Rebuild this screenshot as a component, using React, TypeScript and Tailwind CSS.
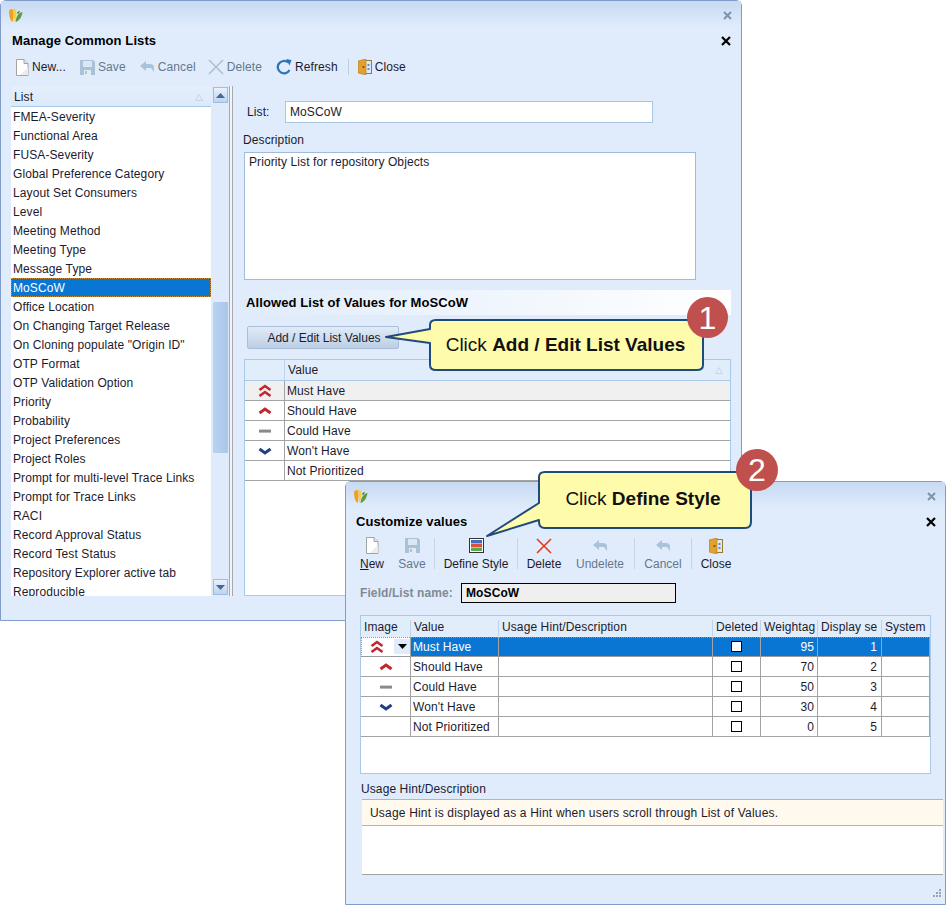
import React from "react";

const listItems = ["FMEA-Severity","Functional Area","FUSA-Severity","Global Preference Category","Layout Set Consumers","Level","Meeting Method","Meeting Type","Message Type","MoSCoW","Office Location","On Changing Target Release","On Cloning populate \"Origin ID\"","OTP Format","OTP Validation Option","Priority","Probability","Project Preferences","Project Roles","Prompt for multi-level Trace Links","Prompt for Trace Links","RACI","Record Approval Status","Record Test Status","Repository Explorer active tab","Reproducible"];

function Logo() {
  return (
    <svg width="15" height="15" viewBox="0 0 15 15">
      <path d="M1 4 C1 1 4 0 5 2 C6 5 5.5 11 4.5 14 C2.5 13 1 8 1 4Z" fill="#f0a028" />
      <path d="M5 1 C7 0 8.5 2 8.5 5 C8.5 9 7.5 12 5.5 14 C6.5 10 6.5 5 5 1Z" fill="#f6cf3e" />
      <path d="M7.5 14 C8 9 10 5 14.5 4 C14 8 11.5 13 7.5 14Z" fill="#5f9a35" />
      <path d="M9 5 C10 3 11.5 3 12 3.5 L10 6Z" fill="#2f7d2a" />
    </svg>
  );
}
function WinX() {
  return <svg width="9" height="9" viewBox="0 0 9 9"><path d="M1 1 L8 8 M8 1 L1 8" stroke="#7d93ad" strokeWidth="2" /></svg>;
}
function BlackX() {
  return <svg width="10" height="10" viewBox="0 0 10 10"><path d="M1 1 L9 9 M9 1 L1 9" stroke="#000" strokeWidth="2.2" /></svg>;
}
function NewIcon() {
  return <svg width="14" height="17" viewBox="0 0 14 17"><path d="M1.5 .5 H9 L13 4.5 V16.5 H1.5Z" fill="#fff" stroke="#a3a3a3" /><path d="M9 .5 V4.5 H13" fill="#e4e4e4" stroke="#a3a3a3" /><path d="M5 16 L13 8 V16Z" fill="#ececec" /></svg>;
}
function SaveIcon() {
  return <svg width="15" height="15" viewBox="0 0 15 15"><path d="M0 0 H13 L15 2 V15 H0Z" fill="#a9c2da" /><rect x="3" y="1" width="9" height="6" fill="#dbe7f2" /><rect x="4" y="10" width="7" height="5" fill="#e3ecf5" /><rect x="5" y="11" width="2" height="3" fill="#a9c2da" /></svg>;
}
function BackIcon() {
  return <svg width="15" height="12" viewBox="0 0 15 12"><path d="M6 0 L0 5 L6 10 V7 H11 L14 11 V6 C14 4 12 3 10 3 H6Z" fill="#aac3da" /></svg>;
}
function GrayDelete() {
  return <svg width="16" height="16" viewBox="0 0 16 16"><path d="M1 1 L15 15 M15 1 L1 15" stroke="#a9bccf" strokeWidth="1.4" /></svg>;
}
function RedDelete() {
  return <svg width="16" height="16" viewBox="0 0 16 16"><path d="M1 1 L15 15 M15 1 L1 15" stroke="#e8391f" strokeWidth="1.6" /></svg>;
}
function RefreshIcon() {
  return <svg width="16" height="16" viewBox="0 0 16 16"><path d="M13.5 11 A6.2 6.2 0 1 1 12 3.4" fill="none" stroke="#2b73b8" strokeWidth="2.2" /><path d="M10 0 L15.5 1 L13.5 6.5Z" fill="#2b73b8" /></svg>;
}
function CloseIcon() {
  return <svg width="14" height="16" viewBox="0 0 14 16"><rect x="7" y="1.5" width="6.5" height="13" fill="#dfe9f3" stroke="#9a7a2c" /><path d="M0 2 L8 0 V16 L0 14Z" fill="#e2a02e" stroke="#a87a1d" strokeWidth=".6" /><circle cx="5.5" cy="8" r="1" fill="#6c4a10" /><rect x="9.5" y="5" width="2" height="2" fill="#5a8fc8" /><rect x="9.5" y="9" width="2" height="2" fill="#5a8fc8" /></svg>;
}
function StyleIcon() {
  return <svg width="15" height="15" viewBox="0 0 15 15"><rect x=".5" y=".5" width="14" height="14" fill="#fff" stroke="#333" /><rect x="2" y="2" width="11" height="3.4" fill="#3f6fc0" /><rect x="2" y="5.8" width="11" height="3.4" fill="#d8503f" /><rect x="2" y="9.6" width="11" height="3.4" fill="#5aa84a" /></svg>;
}
function Chevrons({ kind }: { kind: string }) {
  if (kind === "must") return <svg width="14" height="14" viewBox="0 0 14 14"><path d="M1.5 6 L7 2 L12.5 6 M1.5 12 L7 8 L12.5 12" fill="none" stroke="#c1272d" strokeWidth="2.6" /></svg>;
  if (kind === "should") return <svg width="14" height="14" viewBox="0 0 14 14"><path d="M1.5 9 L7 5 L12.5 9" fill="none" stroke="#c1272d" strokeWidth="3" /></svg>;
  if (kind === "could") return <svg width="14" height="14" viewBox="0 0 14 14"><rect x="1" y="5.6" width="12" height="3" fill="#8a8a8a" /></svg>;
  if (kind === "wont") return <svg width="14" height="14" viewBox="0 0 14 14"><path d="M1.5 5 L7 9 L12.5 5" fill="none" stroke="#1f3f86" strokeWidth="3" /></svg>;
  return null;
}
function SortTri() {
  return <svg width="8" height="7" viewBox="0 0 8 7"><path d="M4 .5 L7.5 6.5 H.5Z" fill="none" stroke="#c3d6ec" /></svg>;
}
function Tool({ icon, label, gray, className }: { icon: React.ReactNode; label: string; gray?: boolean; className?: string }) {
  return (
    <div className={`flex items-center gap-[3px] ${gray ? "text-[#66788c]" : "text-[#1b1b2e]"} ${className ?? ""}`}>
      {icon}
      <span>{label}</span>
    </div>
  );
}
function VTool({ icon, label, gray, w, underline }: { icon: React.ReactNode; label: string; gray?: boolean; w: string; underline?: boolean }) {
  return (
    <div className={`flex flex-col items-center shrink-0 tracking-normal ${w} ${gray ? "text-[#66788c]" : "text-[#1b1b2e]"}`}>
      <div className="h-[21px] flex items-center">{icon}</div>
      <span className="leading-[14px] mt-[1px] whitespace-nowrap">{underline ? <><span className="underline">N</span>ew</> : label}</span>
    </div>
  );
}
const VSep = () => <div className="w-px h-[31px] bg-[#c6d3e2] shrink-0" />;

const mainRows = [["must","Must Have"],["should","Should Have"],["could","Could Have"],["wont","Won't Have"],["","Not Prioritized"]];
const custRows = [["must","Must Have","95","1"],["should","Should Have","70","2"],["could","Could Have","50","3"],["wont","Won't Have","30","4"],["","Not Prioritized","0","5"]];

function TitleBar({ h }: { h: string }) {
  return (
    <div className={`${h} bg-gradient-to-b from-[#c7daf2] to-[#e0ecfb] flex items-center justify-between pl-[7px] pr-[9px] pt-[2px] shrink-0`}>
      <Logo />
      <WinX />
    </div>
  );
}

function Callout({ className, width, height, d }: { className: string; width: number; height: number; d: string }) {
  return (
    <svg className={className} width={width} height={height} viewBox={`0 0 ${width} ${height}`}>
      <path d={d} fill="#fefbaa" stroke="#1f4a7d" strokeWidth="2" strokeLinejoin="round" />
    </svg>
  );
}

function MainWindow() {
  return (
    <div className="w-[742px] h-[621px] bg-[#e0ecfb] border border-[#7f9dc8] rounded-tl-[6px] rounded-tr-[6px] flex flex-col text-[12px] leading-[14px] tracking-[0.1px] text-[#1b1b2e]">
      <TitleBar h="h-[26px]" />
      <div className="flex items-center justify-between pl-[11px] pr-[10px] h-[18px] mt-[5px]">
        <span className="font-bold text-[13px] text-black">Manage Common Lists</span>
        <BlackX />
      </div>
      <div className="flex items-center h-[22px] mt-[6px] pl-[14px] gap-[14px]">
        <Tool icon={<NewIcon />} label="New..." />
        <Tool icon={<SaveIcon />} label="Save" gray />
        <Tool icon={<BackIcon />} label="Cancel" gray />
        <Tool icon={<GrayDelete />} label="Delete" gray className="-ml-[2px]" />
        <Tool icon={<RefreshIcon />} label="Refresh" />
        <div className="w-px h-[16px] bg-[#c0cddd] -ml-[4px] -mr-[5px]" />
        <Tool icon={<CloseIcon />} label="Close" />
      </div>
      <div className="flex mt-[8px] ml-[10px] h-[510px]">
        <div className="w-[200px] flex flex-col overflow-hidden bg-white shrink-0">
          <div className="h-[21px] shrink-0 bg-gradient-to-b from-[#e5effc] to-[#dce9fa] border-b border-[#a9c8ea] flex items-center justify-between pl-[3px] pr-[8px] text-[12px] pt-[2px]">
            <span>List</span><SortTri />
          </div>
          {listItems.map((t) => (
            <div key={t} className={`h-[19px] shrink-0 pl-[2px] flex items-center whitespace-nowrap ${t === "MoSCoW" ? "bg-[#0a76d3] text-white outline-1 -outline-offset-1 outline-dotted outline-[#c98a35]" : ""}`}>{t}</div>
          ))}
        </div>
        <div className="w-[17px] bg-[#dfeafa] flex flex-col items-center ml-px shrink-0">
          <div className="w-[15px] h-[16px] mt-px bg-gradient-to-b from-[#e9f2fd] to-[#bcd3ef] border border-[#9fbde0] flex items-center justify-center">
            <svg width="9" height="5" viewBox="0 0 9 5"><path d="M4.5 0 L9 5 H0Z" fill="#44689a" /></svg>
          </div>
          <div className="w-[15px] h-[151px] mt-[199px] bg-gradient-to-r from-[#b9d2f0] to-[#a9c6ea] rounded-[1px]" />
          <div className="flex-1" />
          <div className="w-[15px] h-[16px] mb-px bg-gradient-to-b from-[#e9f2fd] to-[#bcd3ef] border border-[#9fbde0] flex items-center justify-center">
            <svg width="9" height="5" viewBox="0 0 9 5"><path d="M0 0 H9 L4.5 5Z" fill="#44689a" /></svg>
          </div>
        </div>
        <div className="w-[4px] border-x border-[#a5a8ad] bg-[#f1f4f8] shrink-0" />
        <div className="w-[499px] pl-[11px] flex flex-col relative">
          <div className="flex items-center mt-[15px] h-[22px]">
            <span className="ml-[3px] w-[38px]">List:</span>
            <div className="w-[368px] h-[22px] bg-white border border-[#a9c6e4] pl-[4px] pb-px flex items-center">MoSCoW</div>
          </div>
          <div className="mt-[10px] h-[14px] -ml-px">Description</div>
          <div className="mt-[5px] w-[452px] h-[128px] bg-white border border-[#9fbcdc] px-[4px] py-[2px]">Priority List for repository Objects</div>
          <div className="mt-[10px] w-[487px] h-[25px] bg-gradient-to-r from-[#e0ecfb] to-[#ffffff] flex items-center pl-[2px] font-bold text-[13px] text-black">Allowed List of Values for MoSCoW</div>
          <div className="mt-[11px] ml-[3px] w-[152px] h-[23px] rounded-[2px] border border-[#a9bed8] bg-gradient-to-b from-[#e2ebf7] to-[#bccfe6] flex items-center justify-center tracking-normal pl-[2px]">Add / Edit List Values</div>
          <div className="mt-[10px] w-[487px] flex-1 border border-[#a9c8ea] bg-white flex flex-col overflow-hidden">
            <div className="h-[21px] shrink-0 bg-[#e2edfb] border-b border-[#a9c8ea] flex items-center">
              <div className="w-[40px] h-full border-r border-[#bcd4ef]" />
              <div className="flex-1 pl-[3px]">Value</div>
              <div className="pr-[7px]"><SortTri /></div>
            </div>
            {mainRows.map(([k, v], i) => (
              <div key={v} className={`h-[20px] shrink-0 flex border-b border-[#a3a3a3] ${i === 0 ? "bg-[#f0f0f0]" : ""}`}>
                <div className="w-[40px] border-r border-[#a3a3a3] flex items-center justify-center"><Chevrons kind={k} /></div>
                <div className="flex-1 pl-[2px] flex items-center">{v}</div>
              </div>
            ))}
          </div>
        </div>
      </div>
    </div>
  );
}

function CustomWindow() {
  return (
    <div className="absolute left-[345px] top-[481px] w-[601px] h-[424px] bg-[#e0ecfb] border border-[#7f9dc8] rounded-tl-[6px] rounded-tr-[6px] flex flex-col text-[12px] leading-[14px] tracking-[0.1px] text-[#1b1b2e]">
      <TitleBar h="h-[27px]" />
      <div className="flex items-center justify-between pl-[10px] pr-[9px] h-[16px] mt-[5px]">
        <span className="font-bold text-[13px] text-black">Customize values</span>
        <BlackX />
      </div>
      <div className="flex items-start h-[38px] mt-[5px] pl-[11px]">
        <VTool icon={<NewIcon />} label="New" underline w="w-[30px]" />
        <VTool icon={<SaveIcon />} label="Save" gray w="w-[50px]" />
        <div className="-ml-[3px] mt-[3px]"><VSep /></div>
        <VTool icon={<StyleIcon />} label="Define Style" w="w-[82px]" />
        <div className="mt-[3px]"><VSep /></div>
        <VTool icon={<RedDelete />} label="Delete" w="w-[52px]" />
        <VTool icon={<BackIcon />} label="Undelete" gray w="w-[60px]" />
        <div className="ml-[4px] mt-[3px]"><VSep /></div>
        <VTool icon={<BackIcon />} label="Cancel" gray w="w-[56px]" />
        <div className="mt-[3px]"><VSep /></div>
        <VTool icon={<CloseIcon />} label="Close" w="w-[48px]" />
      </div>
      <div className="flex items-center mt-[10px] ml-[14px] h-[20px]">
        <span className="font-bold text-[#808a96] w-[101px]">Field/List name:</span>
        <div className="w-[215px] h-[20px] bg-[#efefef] border border-black pl-[4px] flex items-center font-bold text-[12px] text-black">MoSCoW</div>
      </div>
      <div className="mt-[12px] ml-[14px] w-[571px] h-[159px] border border-[#a9c8ea] bg-white flex flex-col">
        <div className="h-[21px] bg-[#e2edfb] flex items-end pb-[1px] shrink-0">
          <div className="w-[50px] pl-[3px] border-r border-[#bcd4ef] h-[16px]">Image</div>
          <div className="w-[88px] pl-[3px] border-r border-[#bcd4ef] h-[16px]">Value</div>
          <div className="w-[214px] pl-[3px] border-r border-[#bcd4ef] h-[16px]">Usage Hint/Description</div>
          <div className="w-[48px] pl-[3px] border-r border-[#bcd4ef] h-[16px] whitespace-nowrap">Deleted</div>
          <div className="w-[57px] pl-[3px] border-r border-[#bcd4ef] h-[16px] whitespace-nowrap">Weightag</div>
          <div className="w-[64px] pl-[3px] border-r border-[#bcd4ef] h-[16px] whitespace-nowrap">Display se</div>
          <div className="flex-1 pl-[3px] h-[16px]">System</div>
        </div>
        {custRows.map(([k, v, w, d], i) => {
          const sel = i === 0;
          const line = "border-r border-[#a3a3a3]";
          return (
            <div key={v} className={`h-[20px] shrink-0 flex border-b border-[#a3a3a3] ${sel ? "bg-[#0a76d3] text-white outline-1 -outline-offset-1 outline-dotted outline-[#c98a35]" : ""}`}>
              <div className={`w-[50px] ${line} flex items-center ${sel ? "bg-white pl-[9px] justify-between" : "justify-center"}`}>
                <Chevrons kind={k} />
                {sel && <div className="w-[16px] h-[15px] bg-[#e0ecfb] flex items-center justify-center"><svg width="9" height="5" viewBox="0 0 9 5"><path d="M0 0 H9 L4.5 5Z" fill="#000" /></svg></div>}
              </div>
              <div className={`w-[88px] ${line} pl-[2px] flex items-center whitespace-nowrap`}>{v}</div>
              <div className={`w-[214px] ${line}`} />
              <div className={`w-[48px] ${line} flex items-center justify-center`}>
                <div className="w-[11px] h-[11px] border border-black bg-white" />
              </div>
              <div className={`w-[57px] ${line} flex items-center justify-end pr-[3px]`}>{w}</div>
              <div className={`w-[64px] ${line} flex items-center justify-end pr-[4px]`}>{d}</div>
              <div className="flex-1 border-r border-[#a3a3a3]" />
            </div>
          );
        })}
      </div>
      <div className="mt-[8px] ml-[15px] h-[14px]">Usage Hint/Description</div>
      <div className="mt-[3px] ml-[16px] w-[581px] h-[27px] bg-[#fff9ee] border-y border-[#b5b5b5] pl-[8px] flex items-center tracking-[0.19px]">Usage Hint is displayed as a Hint when users scroll through List of Values.</div>
      <div className="ml-[16px] w-[581px] h-[49px] bg-white border-b border-[#a3a3a3]" />
      <div className="flex-1 flex items-end justify-end pr-[4px] pb-[5px]">
        <svg width="10" height="10" viewBox="0 0 10 10" fill="#98a4b3">
          <rect x="8" y="0" width="2" height="2" /><rect x="5" y="3" width="2" height="2" /><rect x="8" y="3" width="2" height="2" />
          <rect x="2" y="6" width="2" height="2" /><rect x="5" y="6" width="2" height="2" /><rect x="8" y="6" width="2" height="2" />
        </svg>
      </div>
    </div>
  );
}

export default function App() {
  return (
    <div className="relative w-[946px] h-[905px] bg-white overflow-hidden font-['Liberation_Sans',Arial,sans-serif]">
      <MainWindow />
      <CustomWindow />

      <Callout className="absolute left-[380px] top-[315px]" width={330} height={60}
        d="M56 5 Q50 5 50 10 V14 L6 22 L50 28 V50 Q50 55 56 55 H317 Q323 55 323 50 V10 Q323 5 317 5Z" />
      <div className="absolute left-[429px] top-[320px] w-[273px] h-[50px] flex items-center justify-center text-[19px] text-[#111]">
        <span>Click <b>Add / Edit List Values</b></span>
      </div>
      <div className="absolute left-[687px] top-[297px] w-[41px] h-[41px] rounded-full bg-[#c0504d] flex items-center justify-center text-white text-[32px]">1</div>

      <Callout className="absolute left-[480px] top-[465px]" width={280} height={76}
        d="M65 7 Q59 7 59 12 V38 L7 71 L59 55 V57 Q59 63 65 63 H265 Q271 63 271 57 V12 Q271 7 265 7Z" />
      <div className="absolute left-[537px] top-[471px] w-[212px] h-[56px] flex items-center justify-center text-[19px] text-[#111]">
        <span>Click <b>Define Style</b></span>
      </div>
      <div className="absolute left-[736px] top-[449px] w-[42px] h-[42px] rounded-full bg-[#c0504d] flex items-center justify-center text-white text-[32px]">2</div>
    </div>
  );
}
